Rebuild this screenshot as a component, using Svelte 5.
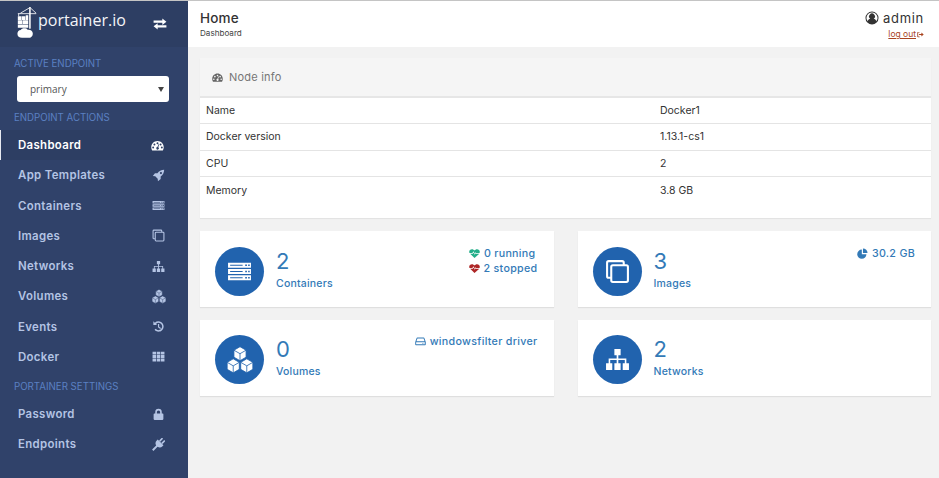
<script>
  const actions = [
    { label: 'Dashboard', icon: 'gauge', active: true },
    { label: 'App Templates', icon: 'rocket' },
    { label: 'Containers', icon: 'server' },
    { label: 'Images', icon: 'clone' },
    { label: 'Networks', icon: 'sitemap' },
    { label: 'Volumes', icon: 'cubes' },
    { label: 'Events', icon: 'history' },
    { label: 'Docker', icon: 'grid' }
  ];
  const settings = [
    { label: 'Password', icon: 'lock' },
    { label: 'Endpoints', icon: 'plug' }
  ];
  const info = [
    ['Name', 'Docker1'],
    ['Docker version', '1.13.1-cs1'],
    ['CPU', '2'],
    ['Memory', '3.8 GB']
  ];
  const cubes = [[12, 6.6], [6.2, 17], [17.8, 17]];
</script>

{#snippet icon(name, cls)}
  <svg class={cls} viewBox="0 0 24 24" fill="currentColor" aria-hidden="true">
    {#if name === 'gauge'}
      <path fill-rule="evenodd" d="M12 3.500C5.600 3.500 .5 8.600.5 15c0 2.200.6 4.200 1.700 6h19.600c1.100-1.800 1.700-3.800 1.700-6 0-6.400-5.100-11.500-11.500-11.500zM12 6a1.800 1.800 0 1 1 0 3.600A1.800 1.800 0 0 1 12 6zM6.300 8.400a1.800 1.800 0 1 1 0 3.600 1.800 1.800 0 0 1 0-3.600zm11.400 0a1.800 1.800 0 1 1 0 3.600 1.800 1.800 0 0 1 0-3.600zM4 14a1.800 1.800 0 1 1 0 3.600A1.800 1.800 0 0 1 4 14zm16 0a1.800 1.800 0 1 1 0 3.600 1.800 1.800 0 0 1 0-3.600zm-5.700-4.800.9.500-1.700 5.300a2.400 2.400 0 1 1-1.700-.4z"/>
    {:else if name === 'rocket'}
      <path d="M22.500 1.500c-5.500.2-9.500 2.500-12.500 6.500H5.500L1.500 13l4.500.5 4.500 4.500.5 4.500 5-4v-4.500c4-3 6.300-7 6.500-12.500zM16.500 5.500a2 2 0 1 1 0 4 2 2 0 0 1 0-4z"/>
    {:else if name === 'server'}
      <path fill-rule="evenodd" d="M1 3.500h22v5H1zM1 9.500h22v5H1zM1 15.500h22v5H1zM17.500 5.200v1.600h1.600V5.200zM20.300 5.200v1.600h1.500V5.200zM17.500 11.200v1.600h1.600v-1.600zM20.300 11.200v1.600h1.500v-1.600zM17.500 17.200v1.600h1.600v-1.600zM20.300 17.200v1.600h1.500v-1.600zM3 5.500v1h12v-1zM3 11.500v1h12v-1zM3 17.500v1h12v-1z"/>
    {:else if name === 'clone'}
      <path fill-rule="evenodd" d="M3.500 1h13A2.500 2.500 0 0 1 19 3.500V5h1.500A2.500 2.500 0 0 1 23 7.500v13a2.500 2.500 0 0 1-2.500 2.500h-13A2.500 2.500 0 0 1 5 20.500V19H3.500A2.500 2.500 0 0 1 1 16.500v-13A2.500 2.500 0 0 1 3.500 1zM17 5V3.500a.5.5 0 0 0-.5-.5h-13a.5.500 0 0 0-.5.500v13a.5.500 0 0 0 .5.500H5V7.500A2.500 2.500 0 0 1 7.500 5zM7.500 7a.5.500 0 0 0-.5.500v13a.5.500 0 0 0 .5.500h13a.5.500 0 0 0 .5-.5v-13a.5.500 0 0 0-.5-.5z"/>
    {:else if name === 'sitemap'}
      <path d="M9 2h6v6h-2.200v3h7.700v4.500H23V22h-6v-6.500h2V12.500h-6.200v3H15V22H9v-6.500h2.200v-3H5v3h2V22H1v-6.500h2.500V11h7.700V8H9z"/>
    {:else if name === 'cubes'}
      {#each cubes as [cx, cy]}
        <path stroke="var(--cut)" stroke-width=".7" stroke-linejoin="round"
          d="M{cx} {cy - 6}l5.200 3v6l-5.200 3-5.200-3v-6z"/>
        <path fill="none" stroke="var(--cut)" stroke-width=".7"
          d="M{cx - 5.200} {cy - 3}l5.200 3 5.200-3M{cx} {cy}v6"/>
      {/each}
    {:else if name === 'history'}
      <path d="M12 2.500a9.500 9.500 0 1 1-7.300 15.600l2.100-1.800A6.700 6.700 0 1 0 12 5.300c-1.800 0-3.500.7-4.700 1.900L9.500 9.400H2.500v-7l2.800 2.800A9.500 9.500 0 0 1 12 2.500zM11 7.500h2.200v5l3.400 2.400-1.300 1.800L11 13.600z"/>
    {:else if name === 'grid'}
      <path d="M1 3h6.500v5.300H1zM8.800 3h6.500v5.300H8.800zM16.500 3H23v5.300h-6.500zM1 9.400h6.500v5.200H1zM8.800 9.400h6.500v5.200H8.800zM16.500 9.400H23v5.200h-6.500zM1 15.700h6.500V21H1zM8.800 15.700h6.500V21H8.800zM16.500 15.700H23V21h-6.500z"/>
    {:else if name === 'lock'}
      <path d="M6 10V7.500a6 6 0 0 1 12 0V10h1.500A1.500 1.500 0 0 1 21 11.500v9a1.500 1.500 0 0 1-1.500 1.500h-15A1.500 1.500 0 0 1 3 20.500v-9A1.500 1.500 0 0 1 4.500 10zm3 0h6V7.500a3 3 0 0 0-6 0z"/>
    {:else if name === 'plug'}
      <g transform="rotate(45 12 12)">
        <path d="M7.500-1.500h3V6h-3zM13.500-1.500h3V6h-3zM4.500 6.500h15v2.500a7.500 7.500 0 0 1-5.700 7.300V27h-3.600V16.300A7.500 7.500 0 0 1 4.500 9z"/>
      </g>
    {:else if name === 'exchange'}
      <path d="M1 6h15V2.500L23 8l-7 5.500V10H1zM23 14H8v-3.500L1 16l7 5.500V18h15z"/>
    {:else if name === 'heart'}
      <path d="M12 22 2.500 12.500h5.700L10 9.800l2.500 5 1.800-3.100.8.800h7.400zM1.200 11C-1 6.800 2 2.500 6.500 2.500c2.200 0 4.200 1.200 5.500 3 1.300-1.800 3.300-3 5.500-3 4.500 0 7.500 4.300 5.300 8.500h-7.200l-1.500-1.500-1.600 2.800L10 7l-2.700 4z"/>
    {:else if name === 'pie'}
      <path d="M10.500 3.500A10 10 0 1 0 20.500 13.500H10.500zM13 1v10h10A10 10 0 0 0 13 1z"/>
    {:else if name === 'hdd'}
      <path fill-rule="evenodd" d="M5 3.500h14c.8 0 1.400.5 1.700 1.200L23.500 13v5.500c0 1-.8 1.500-1.500 1.500H2c-.7 0-1.500-.5-1.500-1.500V13l2.800-8.300C3.600 4 4.200 3.500 5 3.500zM5.300 5.500 3.200 11.500h17.600l-2.100-6zM2.500 13.500v4.500h19v-4.500zM15.500 15h1.800v1.600h-1.800zM18.500 15h1.800v1.600h-1.800z"/>
    {:else if name === 'user'}
      <path fill-rule="evenodd" d="M12 .8a11.200 11.200 0 1 1 0 22.400A11.200 11.200 0 0 1 12 .8zm0 1.900a9.300 9.300 0 0 0-7.400 15c.7-2.500 2.400-4 4.400-4.400a5 5 0 1 1 6 0c2 .4 3.700 1.900 4.400 4.400a9.300 9.300 0 0 0-7.400-15z"/>
    {:else if name === 'out'}
      <path d="M9 3H3.500A2.500 2.500 0 0 0 1 5.500v13A2.500 2.500 0 0 0 3.500 21H9v-2.500H4V5.500h5zM15 5.500V10H7v4h8v4.500l8-6.500z"/>
    {/if}
  </svg>
{/snippet}

<div class="page">
  <aside class="sidebar">
    <div class="brand">
      <svg class="logo" viewBox="0 0 24 38" aria-hidden="true">
        <g fill="none" stroke="#fff" stroke-width="1">
          <path d="M1 9h22M15 1v26M16 1v26M15 2 4 8.500M16 2l7 6.500M2 9v3"/>
        </g>
        <path fill="#fff" d="M1 12h4.500v4.500H1zM6 12h4v4.500H6zM10.500 11h3v5.500h-3zM1 17h5.500v4.500H1zM7 17h6.500v4.500H7zM1 22h12.500v4H1z" />
        <path fill="#fff" d="M6 38c-3.500 0-5.500-2.200-5.500-5s1.800-4.500 4-4.500c1.200-2.200 6.500-2.800 8.500 0 3-.5 6 1.300 6 4.500s-2.500 5-5 5z"/>
      </svg>
      <span class="wordmark">portainer.io</span>
      <span class="switch">{@render icon('exchange', 'ic')}</span>
    </div>
    <div class="sec first">ACTIVE ENDPOINT</div>
    <div class="select"><span>primary</span><i></i></div>
    <div class="sec second">ENDPOINT ACTIONS</div>
    <nav class="items">
      {#each actions as a}
        <div class="item" class:active={a.active} class:wide={a.icon === 'cubes'}>
          <span>{a.label}</span>{@render icon(a.icon, 'ic')}
        </div>
      {/each}
    </nav>
    <div class="sec third">PORTAINER SETTINGS</div>
    <nav class="items">
      {#each settings as a}
        <div class="item"><span>{a.label}</span>{@render icon(a.icon, 'ic')}</div>
      {/each}
    </nav>
  </aside>

  <div class="content">
    <header class="top">
      <div>
        <div class="title">Home</div>
        <div class="crumb">Dashboard</div>
      </div>
      <div class="userbox">
        <div class="user">{@render icon('user', 'uic')}<span>admin</span></div>
        <div class="logout"><u>log out</u>{@render icon('out', 'oic')}</div>
      </div>
    </header>

    <main class="body">
      <section class="panel">
        <div class="phead">{@render icon('gauge', 'pic')}<span>Node info</span></div>
        <div class="table">
          {#each info as row}
            <div class="row"><span>{row[0]}</span><span>{row[1]}</span></div>
          {/each}
        </div>
      </section>

      <div class="stats">
        <div class="card">
          <div class="circle">{@render icon('server', 'big')}</div>
          <div class="nums"><div class="n">2</div><div class="l">Containers</div></div>
          <div class="meta">
            <div>{@render icon('heart', 'mic green')}<span>0 running</span></div>
            <div>{@render icon('heart', 'mic red')}<span>2 stopped</span></div>
          </div>
        </div>
        <div class="card">
          <div class="circle">{@render icon('clone', 'big')}</div>
          <div class="nums"><div class="n">3</div><div class="l">Images</div></div>
          <div class="meta"><div>{@render icon('pie', 'mic')}<span>30.2 GB</span></div></div>
        </div>
        <div class="card">
          <div class="circle">{@render icon('cubes', 'bigger')}</div>
          <div class="nums"><div class="n">0</div><div class="l">Volumes</div></div>
          <div class="meta"><div>{@render icon('hdd', 'mic')}<span>windowsfilter driver</span></div></div>
        </div>
        <div class="card">
          <div class="circle">{@render icon('sitemap', 'big')}</div>
          <div class="nums"><div class="n">2</div><div class="l">Networks</div></div>
        </div>
      </div>
    </main>
  </div>
</div>

<style>
  :global(body) { margin: 0; background: #f2f2f2; }
  .page {
    width: 939px; height: 478px; display: flex; overflow: hidden;
    border-top: 1px solid #c4c4c4; box-sizing: border-box;
    font-family: Inter, "Open Sans", sans-serif; font-size: 11px; color: #333;
  }
  .sidebar { width: 188px; flex: none; background: #30426a; display: flex; flex-direction: column; --cut: #30426a; }
  .brand { height: 46px; background: #2d3e63; display: flex; align-items: flex-start; position: relative; color: #fff; }
  .logo { width: 20px; height: 32px; margin: 5px 0 0 17px; flex: none; }
  .wordmark { font-family: "Open Sans", sans-serif; font-size: 16px; line-height: 22px; margin: 8px 0 0 1px; color: #f4f5f8; }
  .switch { position: absolute; left: 153px; top: 16px; width: 14px; height: 14px; display: block; }
  .switch :global(svg) { width: 14px; height: 14px; display: block; }
  .sec { font-size: 9.700px; line-height: 12px; color: #5b80c2; padding-left: 14px; }
  .first { margin-top: 11px; }
  .second { margin-top: 10px; }
  .third { margin-top: 9px; }
  .select {
    width: 152px; height: 26px; margin: 6px 0 0 17px; background: #fff; border-radius: 3px;
    display: flex; align-items: center; justify-content: space-between; box-sizing: border-box;
    padding: 0 5px 0 13px; font-size: 10px; color: #555; font-family: "Open Sans", sans-serif;
  }
  .select i { width: 0; height: 0; border: 3px solid transparent; border-top: 5px solid #444; border-bottom: 0; }
  .items { display: flex; flex-direction: column; }
  .second + .items { margin-top: 6px; }
  .third + .items { margin-top: 6px; }
  .item {
    height: 30.250px; display: flex; align-items: center; justify-content: space-between;
    padding: 0 23px 0 18px; color: #b4c4e4; font-size: 11.400px; font-weight: 600; letter-spacing: .35px; box-sizing: border-box;
  }
  .item :global(svg) { width: 13px; height: 13px; flex: none; }
  .item.wide :global(svg) { width: 16px; height: 15px; margin-right: -2px; }
  .item.active { background: #2d3e63; color: #fff; border-left: 1px solid #e6e9f0; padding-left: 17px; padding-right: 24px; }
  .content { flex: 1; min-width: 0; display: flex; flex-direction: column; }
  .top { height: 46px; flex: none; background: #fff; display: flex; justify-content: space-between; padding: 9px 15px 0 12px; box-sizing: border-box; }
  .title { font-size: 13.500px; line-height: 16px; font-weight: 500; color: #333; letter-spacing: .2px; }
  .crumb { font-size: 8.100px; line-height: 11px; margin-top: 2px; color: #444; }
  .userbox { display: flex; flex-direction: column; align-items: flex-end; }
  .user { display: flex; align-items: center; font-size: 13px; line-height: 16px; gap: 4px; letter-spacing: .7px; color: #333; }
  .uic { width: 14px; height: 14px; }
  .logout { display: flex; align-items: center; font-size: 8.500px; line-height: 11px; margin-top: 3px; color: #a9441f; }
  .oic { width: 7px; height: 7px; margin-left: 1px; }
  .body { padding: 11px 8px 0 12px; }
  .panel { background: #fff; height: 160px; box-shadow: 0 1px 1px rgba(0,0,0,.06); box-sizing: border-box; }
  .phead {
    height: 40px; background: #f5f5f5; border-bottom: 2px solid #e6e6e6; box-sizing: border-box;
    display: flex; align-items: center; padding-left: 12px; gap: 6px; font-size: 11px; color: #767676; letter-spacing: .2px;
  }
  .pic { width: 11px; height: 11px; color: #666; }
  .row {
    height: 26.300px; display: grid; grid-template-columns: 454px 1fr; align-items: center; padding-left: 6px;
    border-bottom: 1px solid #e4e4e4; box-sizing: border-box; font-size: 10.500px; color: #333;
  }
  .row:last-child { border-bottom: 0; }
  .stats { display: grid; grid-template-columns: 353.500px 353.500px; column-gap: 24px; row-gap: 13px; margin-top: 13px; }
  .card {
    height: 76px; background: #fff; box-shadow: 0 1px 1px rgba(0,0,0,.08); display: flex; padding: 15px 15px 0 15px;
    box-sizing: border-box; color: #337ab7; position: relative;
  }
  .card:nth-child(-n+2) { padding-top: 16px; }
  .card:nth-child(-n+2) .meta { top: 15px; }
  .circle { width: 49px; height: 49px; border-radius: 50%; background: #2163ae; color: #fff; display: flex; align-items: center; justify-content: center; flex: none; --cut: #2163ae; }
  .big { width: 25px; height: 25px; }
  .bigger { width: 30px; height: 28px; }
  .nums { margin-left: 12px; }
  .n { font-size: 22px; line-height: 26px; margin-top: 1px; color: #337ab7; }
  .l { font-size: 10.500px; line-height: 13px; margin-top: 3px; font-weight: 500; letter-spacing: .2px; }
  .meta { position: absolute; right: 16px; top: 14px; font-size: 10.700px; font-weight: 500; line-height: 15px; letter-spacing: .3px; display: flex; flex-direction: column; align-items: flex-end; }
  .meta div { display: flex; align-items: center; gap: 4px; }
  .meta div:first-child:not(:last-child) { padding-right: 2px; }
  .mic { width: 11px; height: 11px; color: #337ab7; }
  .mic.green { color: #23ae89; }
  .mic.red { color: #ae2727; }
</style>
